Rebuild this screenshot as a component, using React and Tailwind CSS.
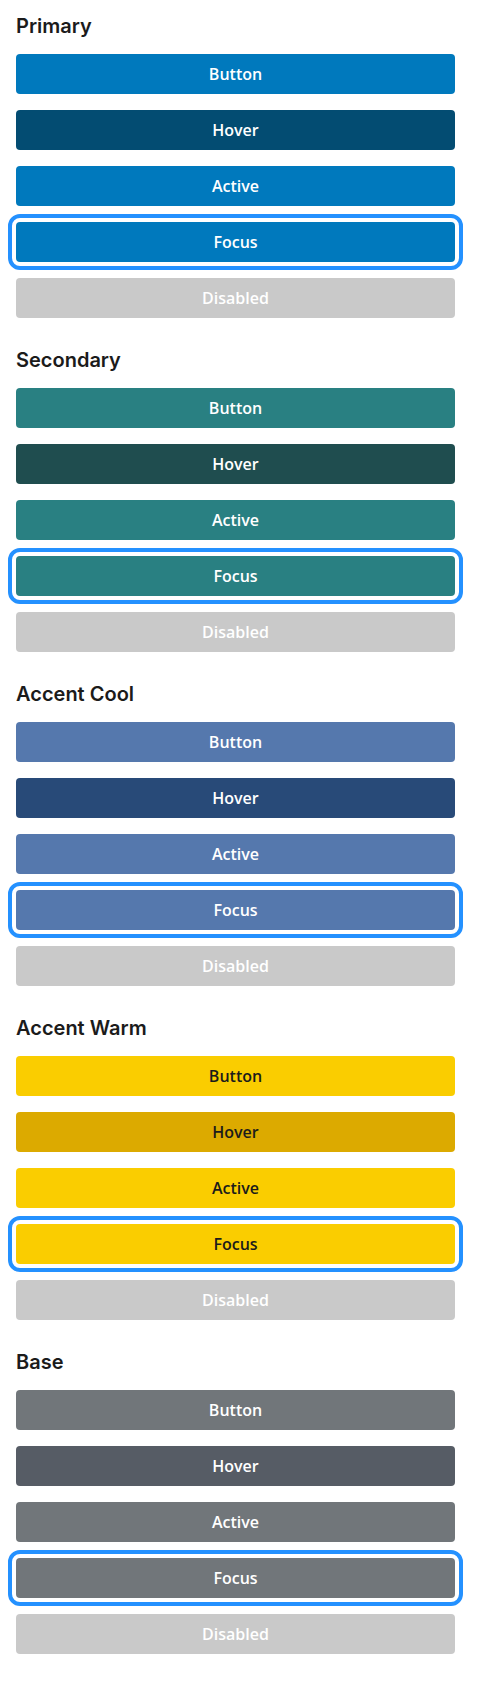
const groups = [
  {
    title: "Primary",
    base: "bg-[#0079bd] text-white",
    hover: "bg-[#034c72] text-white",
  },
  {
    title: "Secondary",
    base: "bg-[#298082] text-white",
    hover: "bg-[#1f4d4f] text-white",
  },
  {
    title: "Accent Cool",
    base: "bg-[#5578ad] text-white",
    hover: "bg-[#284a78] text-white",
  },
  {
    title: "Accent Warm",
    base: "bg-[#facd00] text-[#1b1b1b]",
    hover: "bg-[#dcaa00] text-[#1b1b1b]",
  },
  {
    title: "Base",
    base: "bg-[#71767a] text-white",
    hover: "bg-[#565c65] text-white",
  },
];

const Btn = ({ className, children }) => (
  <button
    type="button"
    className={`h-10 w-full rounded text-[16px] font-semibold ${className}`}
  >
    {children}
  </button>
);

export default function App() {
  return (
    <div
      className="min-h-[1703px] bg-white pl-4 pr-6 pt-[14px] flex flex-col gap-[30px]"
      style={{ fontFamily: "'Open Sans', sans-serif" }}
    >
      {groups.map((g) => (
        <section key={g.title} className="flex flex-col">
          <h2
            className="text-[20px] leading-6 font-semibold text-[#1b1b1b] mb-4"
            style={{ fontFamily: "Inter, sans-serif" }}
          >
            {g.title}
          </h2>
          <div className="flex flex-col gap-4">
            <Btn className={g.base}>Button</Btn>
            <Btn className={g.hover}>Hover</Btn>
            <Btn className={g.base}>Active</Btn>
            <Btn className={`${g.base} outline-4 outline-[#2491ff] outline-offset-4`}>
              Focus
            </Btn>
            <Btn className="bg-[#c9c9c9] text-white">Disabled</Btn>
          </div>
        </section>
      ))}
    </div>
  );
}
